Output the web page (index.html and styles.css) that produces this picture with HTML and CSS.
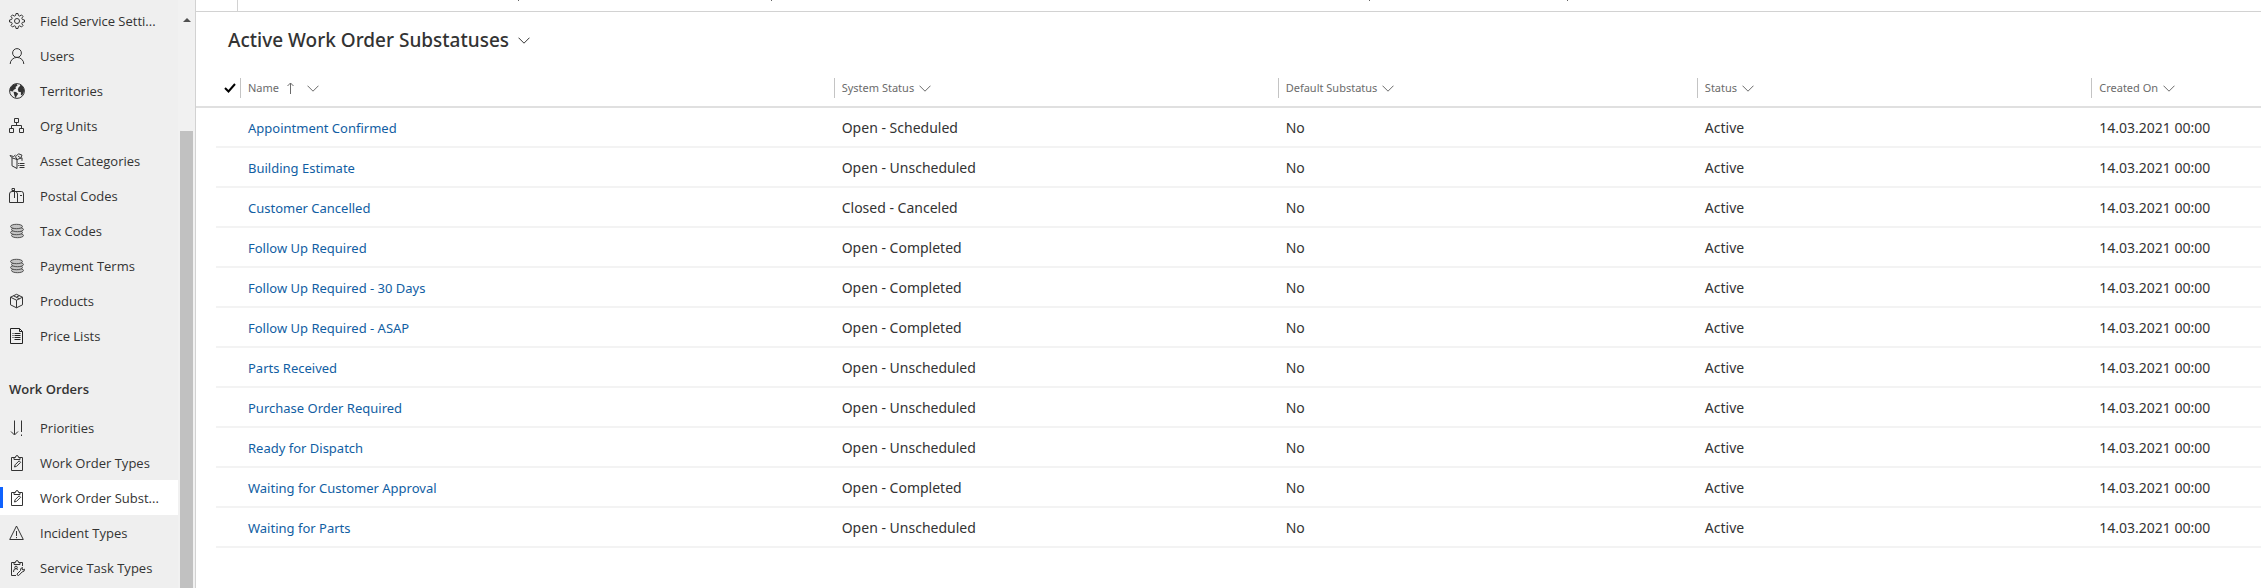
FILE: index.html
```
<!DOCTYPE html>
<html lang="en">
<head>
<meta charset="utf-8">
<title>Active Work Order Substatuses</title>
<link rel="stylesheet" href="styles.css">
</head>
<body>
<svg class="defs" aria-hidden="true">
  <symbol id="chevron" viewBox="0 0 12 7"><path d="M.5.7 6 6.2 11.500.7"/></symbol>
  <symbol id="coins" viewBox="0 0 16 16">
    <g class="shade"><ellipse cx="8.500" cy="12.500" rx="6" ry="2.200"/><ellipse cx="7.500" cy="9.500" rx="6" ry="2.200"/><ellipse cx="8.500" cy="6.500" rx="6" ry="2.200"/><ellipse cx="7.500" cy="3.500" rx="6" ry="2.200"/></g>
  </symbol>
  <symbol id="clip" viewBox="0 0 16 16">
    <path d="M5 2.500H2.500v13h11v-13H11M5 4.500v-2h1.500Q6.500.5 8 .5t1.500 2H11v2z"/><path d="M5.500 12l.6-2.200 4-4 1.500 1.500-4 4z"/>
  </symbol>
</svg>
<div class="app">
  <nav class="side" aria-label="Site map">
    <div class="menu">
      <ul>
        <li><a href="#" title="Field Service Settings"><svg viewBox="0 0 16 16"><path d="M7 .5h2l.4 2 1.300.6 1.800-1.200 1.500 1.500-1.200 1.800.6 1.300 2.100.500v2l-2.100.4-.6 1.300 1.200 1.800-1.500 1.500-1.800-1.200-1.300.6-.4 2.100H7l-.4-2.100-1.300-.6L3.500 14 2 12.500l1.200-1.800-.6-1.300L.5 9V7l2.100-.5.6-1.300L2 3.400 3.500 1.900l1.800 1.200 1.300-.6z"/><circle cx="8" cy="8" r="2.500"/></svg><span>Field Service Setti...</span></a></li>
        <li><a href="#"><svg viewBox="0 0 16 16"><circle cx="8" cy="5" r="4.400"/><path d="M1.200 16a6.800 6.600 0 0 1 13.600 0"/></svg><span>Users</span></a></li>
        <li><a href="#"><svg viewBox="0 0 16 16"><circle cx="8" cy="8" r="7.400"/><path class="solid" d="M1 5.500 4 1.800 7.500.8l1 1.700L6.500 4 7 5.500 4.500 7 4 8.500 1.200 8zM4.500 8.800l2.500.2 2.200 1.700-1.700 2.500-.8 2-1.200-2.500zM9.500 4.500 11 3l.5-1.500 2.500 2.300L15.300 7l-.8 3-1.500 2.500-1.200-.8.2-2.500-2.500-.5-.7-2.200z"/></svg><span>Territories</span></a></li>
        <li><a href="#"><svg viewBox="0 0 16 16"><path d="M5.500.5h4v4h-4zM.5 10.500h4v4h-4zM10.500 10.500h4v4h-4zM7.500 4.500v3M2.500 10.500v-3h10v3"/></svg><span>Org Units</span></a></li>
        <li><a href="#"><svg viewBox="0 0 16 16"><path d="M1 2.500l2 2.300L8 6.500l5-1.700M3 4.800v8l5 2.700M8 6.500v9M1 2.500l3.500 1L6.500 2M8 6.500 6.500 3.800l3-3 3.500 1.400-1.500 3M9 3l2 1.500M13 4.800v3M10.500 10.500h5M10.500 12.500h5M10.500 14.500h5M9 10.500h.8M9 12.500h.8"/></svg><span>Asset Categories</span></a></li>
        <li><a href="#"><svg viewBox="0 0 16 16"><path d="M3 3.500h9.500q2 0 2 2.500v8.500H.5V6Q.5 3.500 3 3.500M8.500 14.500V6q0-2-2-2.500M5.500 10V.5H3v2h2.500M11 7.500h2"/></svg><span>Postal Codes</span></a></li>
        <li><a href="#"><svg viewBox="0 0 16 16"><use href="#coins"/></svg><span>Tax Codes</span></a></li>
        <li><a href="#"><svg viewBox="0 0 16 16"><use href="#coins"/></svg><span>Payment Terms</span></a></li>
        <li><a href="#"><svg viewBox="0 0 16 16"><path d="M1.500 4.200 7.500 1.300l6 2.900v7.600l-6 3-6-3zM1.500 4.200l6 3 6-3M7.500 7.200v7.600M4.500 2.800l6 3M7.500 4l3-1.300"/></svg><span>Products</span></a></li>
        <li><a href="#"><svg viewBox="0 0 16 16"><path class="strong" d="M1.500.5h9l3 3v12h-12zM10.500.5v3h3M3.500 5.500h1M5.500 5.500h6M3.500 7.500h1M5.500 7.500h6M3.500 9.500h1M5.500 9.500h6M5.500 11.500h6"/></svg><span>Price Lists</span></a></li>
      </ul>
      <h2>Work Orders</h2>
      <ul>
        <li><a href="#"><svg viewBox="0 0 16 16"><path d="M5.500.5v14M2 11.500l3.500 3.500L9 11.500M12.500.5v11.500M12.500 14.500v1.500"/></svg><span>Priorities</span></a></li>
        <li><a href="#"><svg viewBox="0 0 16 16"><use href="#clip"/></svg><span>Work Order Types</span></a></li>
        <li><a href="#" class="current" aria-current="page" title="Work Order Substatuses"><svg viewBox="0 0 16 16"><use href="#clip"/></svg><span>Work Order Subst...</span></a></li>
        <li><a href="#"><svg viewBox="0 0 16 16"><path d="M7.500 1 14.300 14.500H.7zM7.500 6v5M7.500 12v1.200"/></svg><span>Incident Types</span></a></li>
        <li><a href="#"><svg viewBox="0 0 16 16"><path d="M5 2.500H2.500v13H7M11 2.500h2.500v3.500M5 4.500v-2h1.500Q6.500.5 8 .5t1.500 2H11v2zM4.500 12l.5-2.500 2-1 2 1"/><circle cx="7" cy="7.500" r="1.300"/><path d="M8 14l3.500-3.500q-.5-2.500 2-3l-.5 1.700 1 .8 1.500-.8q.3 2.500-2.300 2.700L9.700 15.500q-1.700 0-1.700-1.500z"/></svg><span>Service Task Types</span></a></li>
      </ul>
    </div>
    <div class="scroll" aria-hidden="true"><i class="up"></i><i class="thumb"></i></div>
  </nav>
  <main>
    <div class="commands"><b></b><i></i><i></i><i></i><i></i></div>
    <h1><button type="button">Active Work Order Substatuses<svg class="chev" viewBox="0 0 12 7"><use href="#chevron"/></svg></button></h1>
    <table>
      <colgroup><col class="c-check"><col class="c-name"><col class="c-system"><col class="c-default"><col class="c-status"><col class="c-created"></colgroup>
      <thead>
        <tr>
          <th><button type="button" aria-label="Select all"><svg class="tick" viewBox="0 0 12 10"><path d="M1 5l3.500 3.500L11 1"/></svg></button></th>
          <th><button type="button">Name<svg class="sort" viewBox="0 0 7 12"><path d="M3.500 12V1M.5 4l3-3 3 3"/></svg><svg class="chev" viewBox="0 0 12 7"><use href="#chevron"/></svg></button></th>
          <th><button type="button">System Status<svg class="chev" viewBox="0 0 12 7"><use href="#chevron"/></svg></button></th>
          <th><button type="button">Default Substatus<svg class="chev" viewBox="0 0 12 7"><use href="#chevron"/></svg></button></th>
          <th><button type="button">Status<svg class="chev" viewBox="0 0 12 7"><use href="#chevron"/></svg></button></th>
          <th><button type="button">Created On<svg class="chev" viewBox="0 0 12 7"><use href="#chevron"/></svg></button></th>
        </tr>
      </thead>
      <tbody>
        <tr><td></td><td><a href="#">Appointment Confirmed</a></td><td>Open - Scheduled</td><td>No</td><td>Active</td><td>14.03.2021 00:00</td></tr>
        <tr><td></td><td><a href="#">Building Estimate</a></td><td>Open - Unscheduled</td><td>No</td><td>Active</td><td>14.03.2021 00:00</td></tr>
        <tr><td></td><td><a href="#">Customer Cancelled</a></td><td>Closed - Canceled</td><td>No</td><td>Active</td><td>14.03.2021 00:00</td></tr>
        <tr><td></td><td><a href="#">Follow Up Required</a></td><td>Open - Completed</td><td>No</td><td>Active</td><td>14.03.2021 00:00</td></tr>
        <tr><td></td><td><a href="#">Follow Up Required - 30 Days</a></td><td>Open - Completed</td><td>No</td><td>Active</td><td>14.03.2021 00:00</td></tr>
        <tr><td></td><td><a href="#">Follow Up Required - ASAP</a></td><td>Open - Completed</td><td>No</td><td>Active</td><td>14.03.2021 00:00</td></tr>
        <tr><td></td><td><a href="#">Parts Received</a></td><td>Open - Unscheduled</td><td>No</td><td>Active</td><td>14.03.2021 00:00</td></tr>
        <tr><td></td><td><a href="#">Purchase Order Required</a></td><td>Open - Unscheduled</td><td>No</td><td>Active</td><td>14.03.2021 00:00</td></tr>
        <tr><td></td><td><a href="#">Ready for Dispatch</a></td><td>Open - Unscheduled</td><td>No</td><td>Active</td><td>14.03.2021 00:00</td></tr>
        <tr><td></td><td><a href="#">Waiting for Customer Approval</a></td><td>Open - Completed</td><td>No</td><td>Active</td><td>14.03.2021 00:00</td></tr>
        <tr><td></td><td><a href="#">Waiting for Parts</a></td><td>Open - Unscheduled</td><td>No</td><td>Active</td><td>14.03.2021 00:00</td></tr>
      </tbody>
    </table>
  </main>
</div>
</body>
</html>
```

FILE: styles.css
```
* { box-sizing: border-box; }
body { margin: 0; background: #fff; color: #333; font: 14px/20px "Open Sans", "Noto Sans", sans-serif; }
ul { list-style: none; margin: 0; padding: 0; }
a { color: inherit; text-decoration: none; }
button { display: inline-flex; align-items: center; background: none; border: 0; padding: 0; color: inherit; font: inherit; cursor: pointer; }
svg { flex: none; fill: none; stroke: currentColor; stroke-width: 1; }
.defs { position: absolute; width: 0; height: 0; }
.solid { fill: currentColor; stroke: none; }
.strong { stroke: #222; }
.shade { fill: #c4c4c4; stroke: #505050; }

.app { display: flex; min-height: 100vh; }
.side { display: flex; flex: none; width: 196px; background: #efefef; border-right: 1px solid #d2d2d2; }
.menu { flex: none; width: 178px; padding-top: 3px; }
.menu a { display: flex; align-items: center; gap: 15px; height: 35px; padding: 0 8px 0 9px; font-size: 13px; }
.menu svg { width: 16px; height: 16px; }
.menu span { white-space: nowrap; }
.menu .current { background: linear-gradient(#0f62fe, #0f62fe) 0 50% / 3px 21px no-repeat #fff; }
.menu h2 { margin: 0; padding: 26px 9px 11px; font-size: 13px; font-weight: 600; line-height: 20px; }
.scroll { display: flex; flex-direction: column; align-items: center; width: 17px; padding-top: 18px; background: #f1f1f1; }
.up { border: 4px solid transparent; border-top: 0; border-bottom-color: #505050; }
.thumb { flex: 1; width: 13px; margin-top: 109px; background: #c1c1c1; }

main { flex: 1; min-width: 0; font-family: "Noto Sans", "Open Sans", sans-serif; }
.commands { display: grid; grid-template-columns: 42px 281fr 253fr 598fr 198fr 693fr; height: 12px; border-bottom: 1px solid #d2d2d2; }
.commands b { border-right: 1px solid #d2d2d2; }
.commands i { justify-self: end; width: 1px; height: 1px; background: #666; }
h1 { margin: 0; padding: 15px 0 0 32px; font-size: 19px; font-weight: 500; line-height: 26px; }
h1 .chev { width: 12px; height: 7px; margin-left: 9px; }

table { width: 100%; margin: 13px 0 0; table-layout: fixed; border-collapse: separate; border-spacing: 0; }
.c-check { width: 44px; }
.c-name { width: 28.75%; }
.c-system { width: 21.5%; }
.c-default { width: 20.3%; }
.c-status { width: 19.1%; }
th { height: 42px; padding: 4px 0 0; border-bottom: 2px solid #e0e0e0; color: #6b6b6b; font-size: 11px; font-weight: 400; text-align: left; }
th button { height: 20px; padding-left: 7px; border-left: 1px solid #c4c4c4; }
th:first-child button { padding-left: 28px; border: 0; color: #000; }
th .chev { width: 12px; height: 7px; margin-left: 5px; }
.sort { width: 7px; height: 12px; margin-left: 8px; }
.sort + .chev { margin-left: 13px; }
.tick { width: 12px; height: 10px; stroke-width: 2; }
td { height: 40px; padding: 2px 0 0 8px; border-bottom: 2px solid #f3f3f3; }
td:first-child { border-bottom: 0; background: linear-gradient(#f3f3f3, #f3f3f3) 20px 100% / 100% 2px no-repeat; }
td a { color: #115ea3; font-size: 13px; }
```
